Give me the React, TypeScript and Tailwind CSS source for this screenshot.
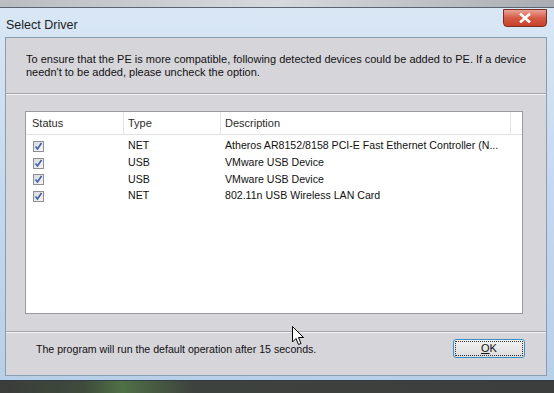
import React from "react";

const rows = [
  { type: "NET", desc: "Atheros AR8152/8158 PCI-E Fast Ethernet Controller (N..." },
  { type: "USB", desc: "VMware USB Device" },
  { type: "USB", desc: "VMware USB Device" },
  { type: "NET", desc: "802.11n USB Wireless LAN Card" },
];

function Check() {
  return (
    <div className="w-[11px] h-[11px] border border-[#8f8f96] bg-gradient-to-br from-[#d9dae0] to-[#f6f6f8] flex items-center justify-center">
      <svg width="9" height="9" viewBox="0 0 9 9">
        <path d="M1.5 4.5 L3.5 7 L7.5 1" fill="none" stroke="#3d5ea8" strokeWidth="1.6" />
      </svg>
    </div>
  );
}

export default function App() {
  return (
    <div
      className="relative w-[554px] h-[393px] overflow-hidden flex flex-col bg-[#5a5d5c]"
      style={{ fontFamily: '"Liberation Sans", Arial, sans-serif' }}
    >
      {/* background strip top */}
      <div className="h-[8px] shrink-0 bg-gradient-to-r from-[#b9bdc2] via-[#d7dadd] to-[#a9adb3] border-b border-[#5d6670]" />
      {/* window */}
      <div className="h-[373px] shrink-0 flex flex-col bg-gradient-to-b from-[#d9e7f5] via-[#c4d8ee] to-[#b8cfe8] pl-[5px] pr-[7px] pb-[4px] border-b border-[#2f3b48]">
        {/* title bar */}
        <div className="h-[29px] shrink-0 flex items-start justify-between">
          <div className="pt-[10px] pl-[1px] text-[12.5px] text-[#1c1c1c] leading-[14px]">Select Driver</div>
          <div className="mt-[1px] w-[44px] h-[18px] rounded-b-[4px] border border-[#7a2d24] bg-gradient-to-b from-[#e9a295] via-[#d45a44] to-[#c6412a] flex items-center justify-center">
            <svg width="12" height="10" viewBox="0 0 12 10">
              <path d="M2 1.5 L10 8.5 M10 1.5 L2 8.5" stroke="#ffffff" strokeWidth="2.6" strokeLinecap="square" />
            </svg>
          </div>
        </div>
        {/* client */}
        <div className="flex-1 flex flex-col bg-[#d6d5da] border border-[#8a9cb0]">
          <div className="h-[55px] shrink-0 pl-[20px] pt-[15px] text-[11px] leading-[13px] text-[#111]">
            <div>To ensure that the PE is more compatible, following detected devices could be added to PE. If a device</div>
            <div>needn't to be added, please uncheck the option.</div>
          </div>
          <div className="h-px bg-[#a7a6ab]" />
          <div className="h-px bg-[#f3f3f5]" />
          <div className="pl-[19px] pr-[23px] pt-[16px]">
            <div className="h-[203px] bg-white border border-[#9a9aa0] flex flex-col text-[10.6px] text-[#111]">
              <div className="h-[23px] flex items-center border-b border-[#e2e3e6] text-[#2b2b2b] text-[11px]">
                <div className="w-[98px] h-full flex items-center pl-[6px] pt-[1px] border-r border-[#e2e3e6]">Status</div>
                <div className="w-[97px] h-full flex items-center pl-[4px] pt-[1px] border-r border-[#e2e3e6]">Type</div>
                <div className="w-[290px] h-full flex items-center pl-[4px] pt-[1px] border-r border-[#e2e3e6]">Description</div>
                <div className="flex-1" />
              </div>
              <div className="pt-[3px]">
                {rows.map((r, i) => (
                  <div key={i} className="h-[16.7px] flex items-center">
                    <div className="w-[98px] pl-[7px] flex items-center">
                      <Check />
                    </div>
                    <div className="w-[97px] pl-[4px]">{r.type}</div>
                    <div className="pl-[4px]">{r.desc}</div>
                  </div>
                ))}
              </div>
            </div>
          </div>
          <div className="mt-[17px] h-px bg-[#a7a6ab]" />
          <div className="h-px bg-[#f3f3f5]" />
          <div className="flex items-center justify-between pl-[30px] pr-[21px] pt-[6px]">
            <div className="mt-[3px] text-[10.6px] text-[#111]">The program will run the default operation after 15 seconds.</div>
            <div className="w-[72px] h-[19px] rounded-[3px] border border-[#3c8fc3] bg-gradient-to-b from-[#f4f4f4] to-[#dcdcdc] p-[1px]">
              <div className="w-full h-full border border-dotted border-[#333] flex items-center justify-center text-[11px] text-[#111] leading-none">
                <span><span className="underline">O</span>K</span>
              </div>
            </div>
          </div>
        </div>
      </div>
      {/* background bottom */}
      <div className="flex-1 bg-[linear-gradient(to_right,#3a3d3b_0%,#3f4a3c_15%,#4f7045_22%,#3e423e_35%,#3b3e3d_100%)]" />
      {/* mouse cursor */}
      <svg className="absolute left-[292px] top-[326px]" width="13" height="20" viewBox="0 0 13 20">
        <path d="M0.5 0.5 L0.5 16 L4 12.5 L6.5 18.5 L9 17.5 L6.5 11.5 L11.5 11.5 Z" fill="#ffffff" stroke="#000000" strokeWidth="1" strokeLinejoin="miter" />
      </svg>
    </div>
  );
}
